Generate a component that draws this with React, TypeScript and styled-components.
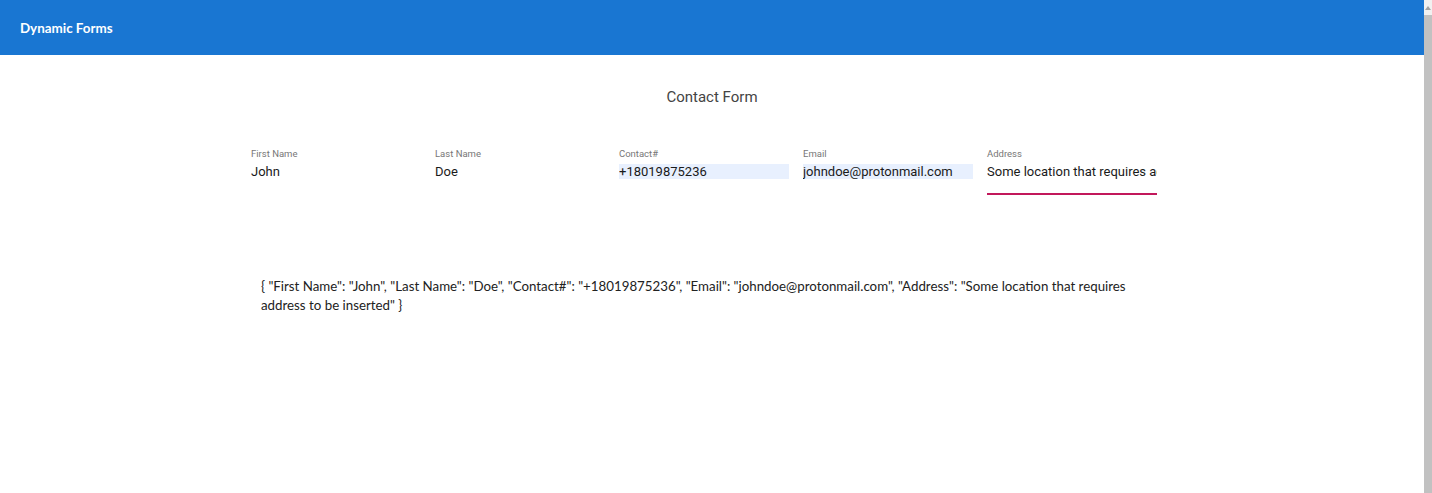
import React from 'react'
import styled, { createGlobalStyle } from 'styled-components'

const GlobalStyle = createGlobalStyle`
  html, body {
    margin: 0;
    padding: 0;
    background: #ffffff;
  }
`

const SShell = styled.div`
  display: flex;
  height: 100vh;
  overflow: hidden;
`

const SMain = styled.div`
  flex: 1;
  display: flex;
  flex-direction: column;
`

const SToolbar = styled.header`
  height: 55px;
  background: #1976d2;
  display: flex;
  align-items: center;
  padding: 0 20px;
  color: #ffffff;
  font-family: Lato, 'Open Sans', sans-serif;
  font-weight: 700;
  font-size: 13.4px;
`

const SContent = styled.div`
  width: 922px;
  margin: 0 auto;
  display: flex;
  flex-direction: column;
`

const STitle = styled.h2`
  margin: 33px 0 0;
  font-family: Roboto, sans-serif;
  font-weight: 400;
  font-size: 15px;
  color: #444444;
  text-align: center;
  line-height: 18px;
`

const SFieldRow = styled.div`
  display: grid;
  grid-template-columns: repeat(5, 184px);
  margin-top: 42px;
`

const SField = styled.label`
  display: flex;
  flex-direction: column;
  width: 170px;
  font-family: Roboto, sans-serif;
`

const SLabel = styled.span`
  font-size: 9.5px;
  color: #777777;
  line-height: 12px;
`

const SInputBox = styled.div<{ $focused?: boolean }>`
  padding-bottom: 14px;
  border-bottom: 2px solid ${p => (p.$focused ? '#c2185b' : 'transparent')};
`

const SInput = styled.input<{ $autofill?: boolean }>`
  display: block;
  width: 100%;
  box-sizing: border-box;
  margin-top: 4px;
  border: none;
  outline: none;
  padding: 0;
  height: 15px;
  font-family: Roboto, sans-serif;
  font-size: 13px;
  color: #1a1a1a;
  background: ${p => (p.$autofill ? '#e8f0fe' : 'transparent')};
`

const SJson = styled.p`
  margin: 82px 0 0;
  padding: 0 10px;
  font-family: Lato, 'Open Sans', sans-serif;
  font-size: 13.3px;
  line-height: 19px;
  color: #222222;
`

const SScrollbar = styled.div`
  width: 8px;
  display: flex;
  flex-direction: column;
  background: #f1f1f1;
`

const SScrollArrow = styled.div`
  height: 15px;
  display: flex;
  justify-content: center;
  align-items: center;
  svg {
    display: block;
  }
`

const SScrollThumb = styled.div`
  flex: 1;
  background: #c1c1c1;
`

const fields = [
  { label: 'First Name', value: 'John' },
  { label: 'Last Name', value: 'Doe' },
  { label: 'Contact#', value: '+18019875236', autofill: true },
  { label: 'Email', value: 'johndoe@protonmail.com', autofill: true },
  { label: 'Address', value: 'Some location that requires address to be inserted', focused: true },
]

export default function App() {
  const data = fields.reduce<Record<string, string>>((acc, f) => {
    acc[f.label] = f.value
    return acc
  }, {})
  const json =
    '{ ' +
    Object.entries(data)
      .map(([k, v]) => `"${k}": "${v}"`)
      .join(', ') +
    ' }'

  return (
    <>
      <GlobalStyle />
      <SShell>
        <SMain>
          <SToolbar>Dynamic Forms</SToolbar>
          <SContent>
            <STitle>Contact Form</STitle>
            <SFieldRow>
              {fields.map(f => (
                <SField key={f.label}>
                  <SLabel>{f.label}</SLabel>
                  <SInputBox $focused={f.focused}>
                    <SInput defaultValue={f.value} $autofill={f.autofill} readOnly />
                  </SInputBox>
                </SField>
              ))}
            </SFieldRow>
            <SJson>{json}</SJson>
          </SContent>
        </SMain>
        <SScrollbar>
          <SScrollArrow>
            <svg width='6' height='4' viewBox='0 0 6 4'>
              <path d='M0 4 L3 0 L6 4 Z' fill='#a3a3a3' />
            </svg>
          </SScrollArrow>
          <SScrollThumb />
        </SScrollbar>
      </SShell>
    </>
  )
}
